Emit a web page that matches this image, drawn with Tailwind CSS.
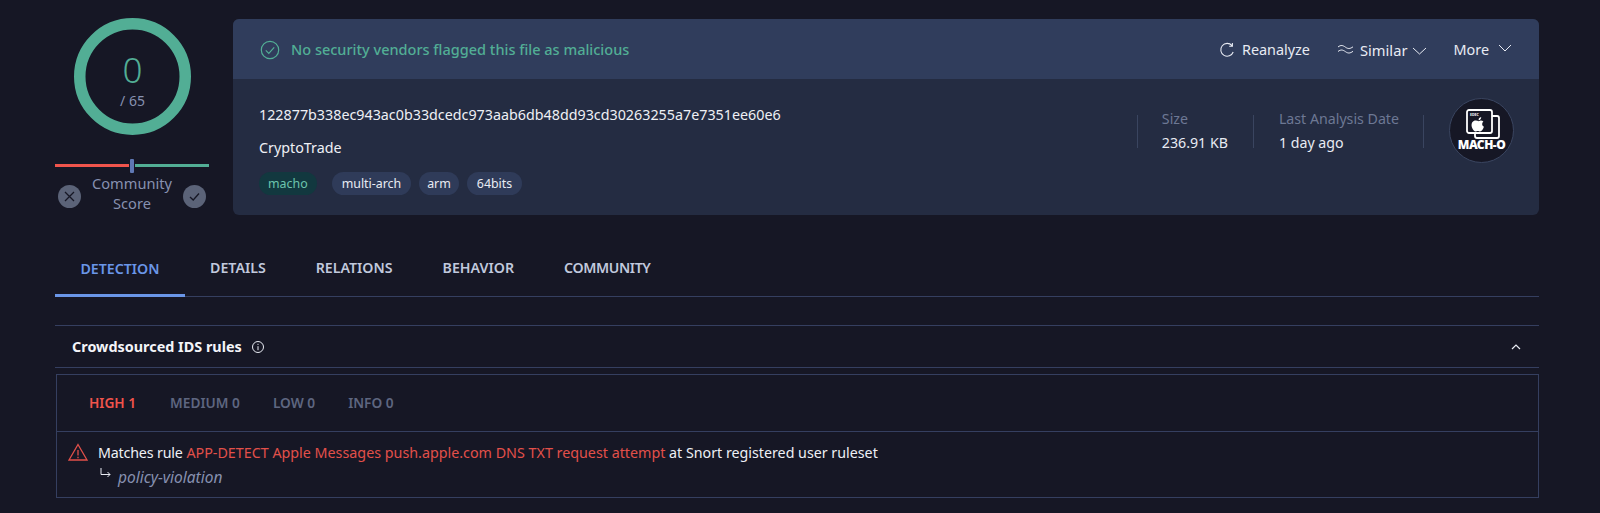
<!DOCTYPE html>
<html lang="en">
<head>
    <meta charset="UTF-8">
    <meta name="viewport" content="width=device-width, initial-scale=1.0">
    <script src="https://cdn.jsdelivr.net/npm/@tailwindcss/browser@4"></script>
    <title>VirusTotal - CryptoTrade</title>
</head>
<body class="w-full h-[513px] overflow-hidden bg-[#161725] text-white font-['Noto_Sans','Open_Sans',sans-serif]">
    <main class="pl-[55px] pr-[61px] pt-[19px]">
        <section class="flex gap-[24px] h-[196px]">
            <div class="w-[154px] shrink-0 flex flex-col items-center">
                <div class="relative w-[117px] h-[117px] mt-[-1px] ml-[1px] shrink-0">
                    <svg class="w-full h-full" viewBox="0 0 117 117" fill="none">
                        <circle cx="58.5" cy="58.5" r="52.75" stroke="#52ae95" stroke-width="11.5"/>
                    </svg>
                    <div class="absolute inset-0 flex flex-col items-center pt-[32px]">
                        <span class="text-[35px] leading-[40px] font-light text-[#52ae95]">0</span>
                        <span class="text-[14px] leading-[20px] mt-[1px] text-[#8791b0]">/ 65</span>
                    </div>
                </div>
                <div class="relative w-full h-[3px] mt-[29px] flex shrink-0">
                    <div class="w-1/2 bg-[#f0544c]"></div>
                    <div class="w-1/2 bg-[#52ae95]"></div>
                    <div class="absolute left-[75px] top-[-5px] w-[4px] h-[14px] rounded-[1px] bg-[#5f78b4] ring-1 ring-[#161725]"></div>
                </div>
                <div class="w-full mt-[6px] flex items-center justify-between px-[3px]">
                    <div class="w-[23px] h-[23px] mt-[6px] rounded-full bg-[#5b6378] flex items-center justify-center">
                        <svg class="w-[13px] h-[13px]" viewBox="0 0 13 13" fill="none" stroke="#161725" stroke-width="1.3"><path d="M2 2l9 9M11 2l-9 9"/></svg>
                    </div>
                    <div class="text-[14.6px] leading-[20px] text-center text-[#8791b0]">Community<br>Score</div>
                    <div class="w-[23px] h-[23px] mt-[6px] rounded-full bg-[#5b6378] flex items-center justify-center">
                        <svg class="w-[13px] h-[13px]" viewBox="0 0 13 13" fill="none" stroke="#161725" stroke-width="1.3"><path d="M2 7l3.200 3L11 3.500"/></svg>
                    </div>
                </div>
            </div>

            <div class="flex-1 rounded-[6px] overflow-hidden bg-[#242c42] flex flex-col">
                <div class="h-[60px] shrink-0 bg-[#303d5c] flex items-center pl-[27px] pr-[27px] pt-[2px]">
                    <svg class="w-[20px] h-[20px]" viewBox="0 0 20 20" fill="none" stroke="#52ae95" stroke-width="1.2"><circle cx="10" cy="10" r="8.700"/><path d="M5.800 10.300l3 3 5.400-6"/></svg>
                    <span class="ml-[11px] text-[14.5px] font-medium text-[#52ae95]">No security vendors flagged this file as malicious</span>
                    <div class="ml-auto flex items-center text-[14.4px] text-[#e8ebf3]">
                        <svg class="w-[16px] h-[16px]" viewBox="0 0 16 16" fill="none" stroke="#e8ebf3" stroke-width="1.1"><path d="M13 3.600A6.400 6.400 0 1 0 14.200 10M13.400 1v3.200h-3.200"/></svg>
                        <span class="ml-[7px]">Reanalyze</span>
                        <svg class="w-[17px] h-[12px] ml-[27px]" viewBox="0 0 17 12" fill="none" stroke="#e8ebf3" stroke-width="1"><path d="M1 3c3-2.400 5-1.600 7.500.2 2.500 1.800 4.500 1.800 7.500-.4M1 7.500c3-2.400 5-1.600 7.500.2 2.500 1.800 4.500 1.800 7.500-.4"/></svg>
                        <span class="ml-[6px] text-[14.7px]">Similar</span>
                        <svg class="w-[15px] h-[8px] ml-[5px] mt-[3px]" viewBox="0 0 15 8" fill="none" stroke="#e8ebf3" stroke-width="1"><path d="M1 1l6.500 6L14 1"/></svg>
                        <span class="ml-[26px]">More</span>
                        <svg class="w-[14px] h-[8px] ml-[9px] mt-[-3px]" viewBox="0 0 14 8" fill="none" stroke="#e8ebf3" stroke-width="1"><path d="M1 1l6 6 6-6"/></svg>
                    </div>
                </div>
                <div class="flex-1 flex pl-[26px] pr-[25px]">
                    <div class="flex-1 pt-[26px]">
                        <div class="text-[14.3px] leading-[20px] text-[#eef0f5]">122877b338ec943ac0b33dcedc973aab6db48dd93cd30263255a7e7351ee60e6</div>
                        <div class="text-[14.3px] leading-[20px] mt-[13px] text-[#eef0f5]">CryptoTrade</div>
                        <div class="flex mt-[14px] text-[12.4px] leading-[23px]">
                            <span class="px-[9px] rounded-full bg-[#12383f] text-[#6cc4ad]">macho</span>
                            <span class="ml-[15px] px-[10px] rounded-full bg-[#2f3b59] text-[#e8ebf3]">multi-arch</span>
                            <span class="ml-[8px] px-[8px] rounded-full bg-[#2f3b59] text-[#e8ebf3]">arm</span>
                            <span class="ml-[8px] px-[10px] rounded-full bg-[#2f3b59] text-[#e8ebf3]">64bits</span>
                        </div>
                    </div>
                    <div class="flex items-start pt-[24px]">
                        <div class="mt-[12px] w-px h-[33px] bg-[#3a4560]"></div>
                        <div class="mt-[4px] pl-[24px] pr-[25px] text-[14.2px] leading-[24px]">
                            <div class="text-[#6d7894]">Size</div>
                            <div class="text-[#e8ebf3]">236.91 KB</div>
                        </div>
                        <div class="mt-[12px] w-px h-[33px] bg-[#3a4560]"></div>
                        <div class="mt-[4px] pl-[25px] pr-[24px] text-[14.2px] leading-[24px]">
                            <div class="text-[#6d7894]">Last Analysis Date</div>
                            <div class="text-[#e8ebf3]">1 day ago</div>
                        </div>
                        <div class="mt-[12px] w-px h-[33px] bg-[#3a4560]"></div>
                        <div class="ml-[25px] mt-[-5px] w-[65px] h-[65px] rounded-full bg-[#161725] border border-[#3a4560] flex flex-col items-center pt-[9px]">
                            <svg class="w-[36px] h-[32px] shrink-0" viewBox="0 0 36 32" fill="none" stroke="#fff" stroke-width="1.800">
                                <rect x="11" y="8" width="24" height="22" rx="2"/>
                                <rect x="3" y="2" width="25" height="23" rx="2" fill="#161725"/>
                                <text x="6" y="7.500" fill="#fff" stroke="none" font-size="3.500" font-weight="700">EDEC</text>
                                <path transform="translate(-4 -0.500) scale(1.300)" fill="#fff" stroke="none" d="M14.500 10.500c1.300-.7 2.400-.5 3.500.2-1.400 1-1.300 3.300.4 4.200-.6 1.700-1.700 3.600-2.900 3.600-.8 0-1-.4-1.800-.4s-1.100.4-1.800.4c-1.600 0-4-4.200-2.600-6.900 1-1.900 3.300-2 5.200-1.100zM14.300 9.800c-.1-1.300.8-2.300 2-2.500.1 1.300-.8 2.400-2 2.500z"/>
                            </svg>
                            <span class="text-[12px] leading-[9px] font-black tracking-[-0.5px] text-white">MACH-O</span>
                        </div>
                    </div>
                </div>
            </div>
        </section>

        <nav class="mt-[34px] h-[48px] flex border-b border-[#353f60] text-[14.2px] font-semibold text-[#c1c9dd]">
            <a class="w-[130px] h-[48px] flex items-center justify-center pb-[6px] border-b-[3px] border-[#6a96e8] text-[#6a96e8]">DETECTION</a>
            <a class="ml-[25px] flex items-center pb-[10px]">DETAILS</a>
            <a class="ml-[50px] flex items-center pb-[10px]">RELATIONS</a>
            <a class="ml-[50px] flex items-center pb-[10px]">BEHAVIOR</a>
            <a class="ml-[50px] flex items-center pb-[10px] tracking-[-0.4px]">COMMUNITY</a>
        </nav>

        <section class="mt-[28px] border-t border-[#353f60]">
            <div class="h-[42px] border-b border-[#353f60] flex items-center pl-[17px] pr-[18px]">
                <h2 class="text-[14.4px] font-bold text-[#f3f4f8]">Crowdsourced IDS rules</h2>
                <svg class="w-[14px] h-[14px] ml-[9px]" viewBox="0 0 14 14" fill="none" stroke="#e8ebf3" stroke-width="1"><circle cx="7" cy="7" r="5.500"/><path d="M7 6.200v4M7 3.800v1.100"/></svg>
                <svg class="w-[10px] h-[6px] ml-auto" viewBox="0 0 10 6" fill="none" stroke="#e8ebf3" stroke-width="1.200"><path d="M1 5l4-4 4 4"/></svg>
            </div>
            <div class="mt-[6px] ml-[1px] border border-[#353f60]">
                <div class="h-[57px] border-b border-[#353f60] flex items-center pl-[32px] text-[13.7px] font-semibold text-[#5e6680]">
                    <span class="text-[#f0544c]">HIGH 1</span>
                    <span class="ml-[34px]">MEDIUM 0</span>
                    <span class="ml-[33px]">LOW 0</span>
                    <span class="ml-[33px]">INFO 0</span>
                </div>
                <div class="flex pl-[11px] pt-[9px] h-[65px]">
                    <svg class="w-[20px] h-[19px] mt-[2px]" viewBox="0 0 20 19" fill="none" stroke="#e2504a" stroke-width="1.300"><path d="M10 1.500L19 17H1zM10 7v5.500M10 13.800v1.500"/></svg>
                    <div class="ml-[10px] text-[14.25px] leading-[24px] text-[#eef0f5]">
                        <div><span class="tracking-[-0.17px]">Matches rule</span> <span class="text-[14.3px] text-[#e2504a]">APP-DETECT Apple Messages push.apple.com DNS TXT request attempt</span> at Snort registered user ruleset</div>
                        <div class="flex items-center">
                            <svg class="w-[11px] h-[11px] ml-[2px] mb-[7px]" viewBox="0 0 11 11" fill="none" stroke="#e8ebf3" stroke-width="1"><path d="M1 0v6.500h9M7.500 4l2.500 2.500L7.500 9"/></svg>
                            <span class="ml-[7px] text-[15.5px] italic text-[#8791b0]">policy-violation</span>
                        </div>
                    </div>
                </div>
            </div>
        </section>
    </main>
</body>
</html>
